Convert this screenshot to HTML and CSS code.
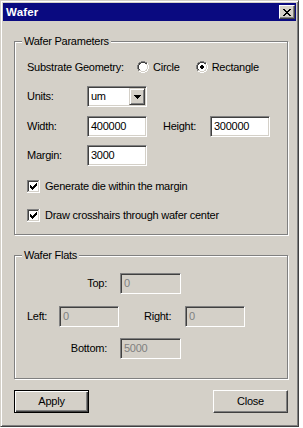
FILE: index.html
```html
<!DOCTYPE html>
<html>
<head>
<meta charset="utf-8">
<link rel="stylesheet" href="styles.css">
</head>
<body>
<div class="window">
  <div class="titlebar">
    <span class="title">Wafer</span>
    <span class="cap-btn">
      <svg width="8" height="7" viewBox="0 0 8 7" shape-rendering="crispEdges"><path fill="#000" d="M0 0h2v1H0zM6 0h2v1H6zM1 1h2v1H1zM5 1h2v1H5zM2 2h4v1H2zM3 3h2v1H3zM2 4h4v1H2zM1 5h2v1H1zM5 5h2v1H5zM0 6h2v1H0zM6 6h2v1H6z"/></svg>
    </span>
  </div>
  <div class="client">
    <div class="group params">
      <span class="group-title">Wafer Parameters</span>
      <div class="row r-geom">
        <span class="lbl lbl-geom">Substrate Geometry:</span>
        <span class="radio-item">
          <svg class="radio" width="12" height="12" viewBox="0 0 12 12" shape-rendering="crispEdges"><path fill="#808080" d="M4 0h4v1H4zM2 1h2v1H2zM8 1h2v1H8zM1 2h1v2H1zM0 4h1v4H0zM1 8h1v2H1z"/><path fill="#fff" d="M10 2h1v2h-1zM11 4h1v4h-1zM10 8h1v2h-1zM8 10h2v1H8zM2 10h2v1H2zM4 11h4v1H4z"/><path fill="#404040" d="M4 1h4v1H4zM2 2h2v1H2zM8 2h2v1H8zM2 3h1v1H2zM1 4h1v4H1zM2 8h1v1H2z"/><path fill="#d4d0c8" d="M9 3h1v1H9zM10 4h1v4h-1zM9 8h1v2H9zM8 9h1v1H8zM2 9h2v1H2zM4 10h4v1H4z"/><path fill="#fff" d="M4 2h4v1H4zM3 3h6v1H3zM2 4h8v4H2zM3 8h6v1H3zM4 9h4v1H4z"/></svg>
          <span>Circle</span>
        </span>
        <span class="radio-item">
          <svg class="radio" width="12" height="12" viewBox="0 0 12 12" shape-rendering="crispEdges"><path fill="#808080" d="M4 0h4v1H4zM2 1h2v1H2zM8 1h2v1H8zM1 2h1v2H1zM0 4h1v4H0zM1 8h1v2H1z"/><path fill="#fff" d="M10 2h1v2h-1zM11 4h1v4h-1zM10 8h1v2h-1zM8 10h2v1H8zM2 10h2v1H2zM4 11h4v1H4z"/><path fill="#404040" d="M4 1h4v1H4zM2 2h2v1H2zM8 2h2v1H8zM2 3h1v1H2zM1 4h1v4H1zM2 8h1v1H2z"/><path fill="#d4d0c8" d="M9 3h1v1H9zM10 4h1v4h-1zM9 8h1v2H9zM8 9h1v1H8zM2 9h2v1H2zM4 10h4v1H4z"/><path fill="#fff" d="M4 2h4v1H4zM3 3h6v1H3zM2 4h8v4H2zM3 8h6v1H3zM4 9h4v1H4z"/><path fill="#000" d="M5 4h2v1H5zM4 5h4v2H4zM5 7h2v1H5z"/></svg>
          <span>Rectangle</span>
        </span>
      </div>
      <div class="row r-units">
        <span class="lbl">Units:</span>
        <div class="combo">
          <span class="combo-text">um</span>
          <span class="combo-btn">
            <svg width="7" height="4" viewBox="0 0 7 4" shape-rendering="crispEdges"><path fill="#000" d="M0 0h7v1H0zM1 1h5v1H1zM2 2h3v1H2zM3 3h1v1H3z"/></svg>
          </span>
        </div>
      </div>
      <div class="row r-size">
        <span class="lbl">Width:</span>
        <div class="edit">400000</div>
        <span class="lbl lbl-height">Height:</span>
        <div class="edit">300000</div>
      </div>
      <div class="row r-margin">
        <span class="lbl">Margin:</span>
        <div class="edit">3000</div>
      </div>
      <div class="check-row c-first">
        <svg class="check" width="13" height="13" viewBox="0 0 13 13" shape-rendering="crispEdges"><rect width="13" height="13" fill="#fff"/><path fill="#808080" d="M0 0h12v1H0zM0 1h1v11H0z"/><path fill="#404040" d="M1 1h10v1H1zM1 2h1v9H1z"/><path fill="#fff" d="M12 0h1v13h-1zM0 12h12v1H0z"/><path fill="#d4d0c8" d="M11 1h1v11h-1zM1 11h10v1H1z"/><polygon fill="#000" points="3,5 4,5 4,6 5,6 5,7 6,7 6,6 7,6 7,5 8,5 8,4 9,4 9,3 10,3 10,6 9,6 9,7 8,7 8,8 7,8 7,9 6,9 6,10 5,10 5,9 4,9 4,8 3,8"/></svg>
        <span>Generate die within the margin</span>
      </div>
      <div class="check-row c-second">
        <svg class="check" width="13" height="13" viewBox="0 0 13 13" shape-rendering="crispEdges"><rect width="13" height="13" fill="#fff"/><path fill="#808080" d="M0 0h12v1H0zM0 1h1v11H0z"/><path fill="#404040" d="M1 1h10v1H1zM1 2h1v9H1z"/><path fill="#fff" d="M12 0h1v13h-1zM0 12h12v1H0z"/><path fill="#d4d0c8" d="M11 1h1v11h-1zM1 11h10v1H1z"/><polygon fill="#000" points="3,5 4,5 4,6 5,6 5,7 6,7 6,6 7,6 7,5 8,5 8,4 9,4 9,3 10,3 10,6 9,6 9,7 8,7 8,8 7,8 7,9 6,9 6,10 5,10 5,9 4,9 4,8 3,8"/></svg>
        <span>Draw crosshairs through wafer center</span>
      </div>
    </div>

    <div class="group flats">
      <span class="group-title">Wafer Flats</span>
      <div class="row f-top">
        <span class="lbl lbl-right">Top:</span>
        <div class="edit disabled wide">0</div>
      </div>
      <div class="row f-mid">
        <span class="lbl lbl-left">Left:</span>
        <div class="edit disabled">0</div>
        <span class="lbl lbl-rgt">Right:</span>
        <div class="edit disabled">0</div>
      </div>
      <div class="row f-bottom">
        <span class="lbl lbl-right">Bottom:</span>
        <div class="edit disabled wide">5000</div>
      </div>
    </div>

    <div class="buttons">
      <button class="btn default">Apply</button>
      <button class="btn">Close</button>
    </div>
  </div>
</div>
</body>
</html>
```

FILE: styles.css
```css
html, body {
  margin: 0;
  padding: 0;
  background: #fff;
}

body {
  font-family: "Liberation Sans", Arial, sans-serif;
  font-size: 11px;
  line-height: 13px;
  color: #000;
  letter-spacing: -0.25px;
}

.window {
  width: 299px;
  height: 427px;
  box-sizing: border-box;
  background: #d4d0c8;
  border: 1px solid;
  border-color: #d4d0c8 #404040 #404040 #d4d0c8;
  box-shadow: inset 1px 1px #fff, inset -1px -1px #808080;
  padding: 2px;
  display: flex;
  flex-direction: column;
}

.titlebar {
  height: 18px;
  flex: none;
  background: #0a0a80;
  display: flex;
  align-items: center;
  justify-content: space-between;
  padding: 0 1px 0 3px;
}

.title {
  color: #fff;
  font-weight: bold;
  font-size: 11.5px;
  letter-spacing: 0.2px;
}

.cap-btn {
  width: 16px;
  height: 14px;
  box-sizing: border-box;
  background: #d4d0c8;
  border: 1px solid;
  border-color: #fff #404040 #404040 #fff;
  box-shadow: inset -1px -1px #808080;
  display: flex;
  align-items: center;
  justify-content: center;
  padding: 0 1px 0 0;
}

.client {
  padding: 20px 0 0 11px;
}

.group {
  position: relative;
  width: 274px;
  box-sizing: border-box;
  border: 1px solid #808080;
  box-shadow: inset 1px 1px #fff, 1px 1px #fff;
  padding-left: 12px;
}

.params {
  height: 194px;
  padding-top: 18px;
}

.flats {
  height: 124px;
  margin-top: 20px;
  padding-top: 17px;
}

.group-title {
  position: absolute;
  top: -7px;
  left: 7px;
  padding: 0 2px;
  background: #d4d0c8;
}

.row {
  display: flex;
  align-items: center;
}

.lbl {
  width: 60px;
  flex: none;
}

.r-geom {
  height: 14px;
}

.lbl-geom {
  width: 110px;
}

.radio-item {
  display: flex;
  align-items: center;
  gap: 4px;
  margin-right: 16px;
}

.radio, .check {
  display: block;
  flex: none;
}

.r-units {
  margin-top: 12px;
}

.r-size {
  margin-top: 9px;
}

.r-margin {
  margin-top: 8px;
}

.lbl-height {
  width: 47px;
  margin-left: 16px;
}

.combo {
  width: 60px;
  height: 21px;
  box-sizing: border-box;
  background: #fff;
  border: 1px solid;
  border-color: #808080 #fff #fff #808080;
  box-shadow: inset 1px 1px #404040, inset -1px -1px #d4d0c8;
  padding: 2px 2px 2px 3px;
  display: flex;
  align-items: center;
  justify-content: space-between;
}

.combo-btn {
  width: 16px;
  height: 17px;
  box-sizing: border-box;
  background: #d4d0c8;
  border: 1px solid;
  border-color: #d4d0c8 #404040 #404040 #d4d0c8;
  box-shadow: inset 1px 1px #fff, inset -1px -1px #808080;
  display: flex;
  align-items: center;
  justify-content: center;
  margin-right: -1px;
}

.edit {
  width: 60px;
  height: 21px;
  box-sizing: border-box;
  background: #fff;
  border: 1px solid;
  border-color: #808080 #fff #fff #808080;
  box-shadow: inset 1px 1px #404040, inset -1px -1px #d4d0c8;
  padding: 0 3px;
  display: flex;
  align-items: center;
}

.edit.disabled {
  background: #d4d0c8;
  color: #808080;
}

.edit.wide {
  width: 61px;
}

.check-row {
  display: flex;
  align-items: center;
  gap: 5px;
  height: 13px;
}

.c-first {
  margin-top: 14px;
}

.c-second {
  margin-top: 16px;
}

.lbl-right {
  width: 80px;
  text-align: right;
  margin-right: 13px;
}

.lbl-left {
  width: 32px;
}

.lbl-rgt {
  width: 41px;
  margin-left: 25px;
}

.f-mid {
  margin-top: 12px;
}

.f-bottom {
  margin-top: 11px;
}

.buttons {
  width: 274px;
  margin-top: 11px;
  display: flex;
  justify-content: space-between;
}

.btn {
  width: 75px;
  height: 23px;
  box-sizing: border-box;
  padding: 0;
  font: inherit;
  letter-spacing: inherit;
  color: #000;
  background: #d4d0c8;
  border: 1px solid;
  border-color: #fff #404040 #404040 #fff;
  box-shadow: inset -1px -1px #808080;
}

.btn.default {
  border-color: #000;
  box-shadow: inset 1px 1px #fff, inset -1px -1px #404040, inset -2px -2px #808080;
}
```
